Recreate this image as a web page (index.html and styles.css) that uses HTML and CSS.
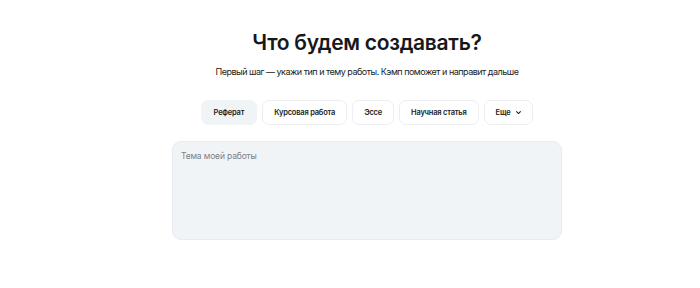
FILE: index.html
```html
<!DOCTYPE html>
<html lang="ru">
<head>
<meta charset="utf-8">
<link rel="stylesheet" href="styles.css">
</head>
<body>
<main class="wrap">
  <h1 class="title">Что будем создавать?</h1>
  <p class="subtitle">Первый шаг — укажи тип и тему работы. Кэмп поможет и направит дальше</p>
  <div class="types">
    <button class="chip active">Реферат</button>
    <button class="chip">Курсовая работа</button>
    <button class="chip">Эссе</button>
    <button class="chip">Научная статья</button>
    <button class="chip more">Еще
      <svg class="chev" width="7" height="7" viewBox="0 0 8 8"><path d="M1.8 3 L4 5.2 L6.2 3" fill="none" stroke="#222" stroke-width="1.2" stroke-linecap="round" stroke-linejoin="round"/></svg>
    </button>
  </div>
  <textarea class="topic" placeholder="Тема моей работы"></textarea>
</main>
</body>
</html>
```

FILE: styles.css
```css
* { box-sizing: border-box; }
html, body { margin: 0; padding: 0; background: #fff; }
body { font-family: Inter, "Noto Sans", sans-serif; color: #1d1d1f; }
.wrap {
  width: 390px;
  margin-left: 172px;
  padding-top: 30px;
  display: flex;
  flex-direction: column;
  align-items: center;
}
.title {
  margin: 0;
  font-size: 21px;
  font-weight: 600;
  letter-spacing: -0.3px;
  line-height: 26px;
  color: #18181a;
  white-space: nowrap;
}
.subtitle {
  margin: 10px 0 0;
  font-size: 9px;
  letter-spacing: -0.5px;
  line-height: 12px;
  color: #222;
  white-space: nowrap;
}
.types {
  margin-top: 22px;
  display: flex;
  gap: 5px;
}
.chip {
  height: 25px;
  padding: 0 11px;
  border: 1px solid #eceef1;
  border-radius: 7px;
  background: #fff;
  font-family: inherit;
  font-size: 7.5px;
  letter-spacing: -0.2px;
  font-weight: 600;
  color: #222;
  display: flex;
  align-items: center;
  gap: 5px;
}
.chip.active { background: #f1f4f7; border-color: #f1f4f7; padding: 0 12px; }
.chip.more { padding: 0 10px 0 11px; }
.chev { display: block; }
.topic {
  margin-top: 16px;
  width: 390px;
  height: 99px;
  border: 1px solid #e8ebef;
  border-radius: 9px;
  background: #f1f4f7;
  padding: 8px 8px;
  line-height: 12px;
  font-family: inherit;
  font-size: 8.5px;
  letter-spacing: -0.15px;
  resize: none;
  outline: none;
}
.topic::placeholder { color: #7b7f85; }
```
